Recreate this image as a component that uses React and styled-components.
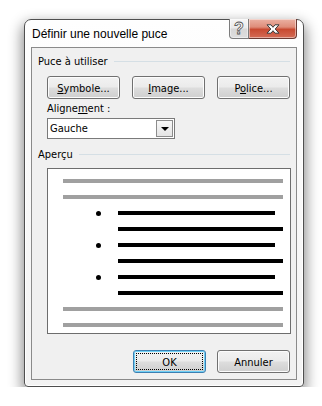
import React from 'react';
import styled, { createGlobalStyle } from 'styled-components';

const GlobalStyle = createGlobalStyle`
  html, body {
    margin: 0;
    background: #ffffff;
  }
  body {
    font-family: "Liberation Sans", Arial, sans-serif;
  }
`;

const uiFont = `"DejaVu Sans Condensed", "DejaVu Sans", sans-serif`;

const Page = styled.div`
  padding: 19px 0 0 24px;
`;

const Window = styled.div`
  width: 280px;
  box-sizing: border-box;
  border: 1px solid #4f4f4f;
  border-radius: 7px 7px 4px 4px;
  background: linear-gradient(#fefefe, #f3f3f3);
  box-shadow: 0 6px 14px 2px rgba(0, 0, 0, 0.45), inset 0 0 0 1px #ffffff;
  padding: 0 6px 6px 6px;
`;

const TitleBar = styled.div`
  height: 27px;
  display: flex;
  align-items: center;
  padding-left: 1px;
`;

const Title = styled.div`
  flex: 1;
  font-family: "Liberation Sans", Arial, sans-serif;
  font-size: 12px;
  color: #000;
`;

const Caption = styled.div`
  align-self: flex-start;
  margin-top: -1px;
  display: flex;
`;

const CaptionButton = styled.div`
  height: 20px;
  box-sizing: border-box;
  display: flex;
  align-items: center;
  justify-content: center;
  border: 1px solid ${(p) => (p.$close ? '#6b3a33' : '#7c7c7c')};
  border-top: none;
  width: ${(p) => (p.$close ? '48px' : '20px')};
  border-radius: ${(p) => (p.$close ? '0 0 4px 0' : '0 0 0 4px')};
  border-left: ${(p) => (p.$close ? 'none' : '1px solid #7c7c7c')};
  background: ${(p) =>
    p.$close
      ? 'linear-gradient(#ebb1a3 0%, #df8d7a 42%, #c84a31 55%, #d46c56 100%)'
      : 'linear-gradient(#f6f6f6 0%, #e9e9e9 48%, #d7d7d7 52%, #dedede 100%)'};
  box-shadow: inset 0 0 0 1px rgba(255, 255, 255, 0.45);
`;

const HelpMark = styled.span`
  font-family: "Liberation Sans", Arial, sans-serif;
  font-weight: bold;
  font-size: 16px;
  line-height: 16px;
  color: #ffffff;
  -webkit-text-stroke: 0.8px #505050;
  margin-top: 1px;
`;

const Client = styled.div`
  border: 1px solid #8a8a8a;
  background: #f0f0f0;
  padding: 6px;
  display: flex;
  flex-direction: column;
  font-family: ${uiFont};
  font-size: 11px;
  color: #000;
`;

const GroupHeader = styled.div`
  height: 15px;
  display: flex;
  align-items: center;
  margin-top: ${(p) => p.$top || 0}px;
  span {
    line-height: 15px;
  }
  &::after {
    content: '';
    flex: 1;
    height: 1px;
    margin-left: 6px;
    background: #d5dfe5;
  }
`;

const ButtonRow = styled.div`
  display: flex;
  gap: ${(p) => p.$gap || 12}px;
  justify-content: ${(p) => (p.$end ? 'flex-end' : 'flex-start')};
  margin-left: ${(p) => (p.$end ? 0 : 9)}px;
  margin-top: ${(p) => p.$top || 0}px;
`;

const Button = styled.div`
  position: relative;
  width: 73px;
  height: 23px;
  box-sizing: border-box;
  display: flex;
  align-items: center;
  justify-content: center;
  border: 1px solid ${(p) => (p.$default ? '#3c7fb1' : '#707070')};
  border-radius: 3px;
  background: linear-gradient(#f2f2f2 0%, #ebebeb 48%, #dddddd 52%, #cfcfcf 100%);
  box-shadow: inset 0 0 0 1px ${(p) => (p.$default ? '#6fd0f6' : '#fcfcfc')};
  padding-top: 1px;
`;

const FocusRing = styled.span`
  position: absolute;
  inset: 2px;
  border: 1px dotted #000;
`;

const U = styled.span`
  text-decoration: underline;
`;

const Label = styled.div`
  height: 15px;
  line-height: 15px;
  margin: 2px 0 0 9px;
`;

const Combo = styled.div`
  width: 128px;
  height: 21px;
  box-sizing: border-box;
  margin: 2px 0 0 9px;
  border: 1px solid #7a7a7a;
  background: #ffffff;
  display: flex;
  align-items: stretch;
`;

const ComboText = styled.div`
  flex: 1;
  padding-left: 2px;
  display: flex;
  align-items: center;
`;

const ComboArrow = styled.div`
  width: 17px;
  box-sizing: border-box;
  border: 1px solid #8c8c8c;
  margin: 1px;
  background: linear-gradient(#f8f8f8, #e4e4e4);
  display: flex;
  align-items: center;
  justify-content: center;
  &::before {
    content: '';
    border-left: 4px solid transparent;
    border-right: 4px solid transparent;
    border-top: 4px solid #000;
  }
`;

const Preview = styled.div`
  width: 244px;
  height: 166px;
  box-sizing: border-box;
  margin: 6px 0 0 9px;
  border: 1px solid #6d6d6d;
  background: #ffffff;
  padding: 10px 7px 0 15px;
  display: flex;
  flex-direction: column;
  gap: 12px;
`;

const Line = styled.div`
  height: 4px;
  display: flex;
  align-items: center;
  padding-left: ${(p) => p.$indent || 0}px;
  padding-right: ${(p) => p.$inset || 0}px;
`;

const Bar = styled.div`
  flex: 1;
  height: 4px;
  background: ${(p) => (p.$dark ? '#000000' : '#a0a0a0')};
`;

const Dot = styled.span`
  width: 5px;
  height: 5px;
  flex: none;
  border-radius: 50%;
  background: #000;
  margin-right: 17px;
`;

const previewLines = [
  { type: 'text' },
  { type: 'text' },
  { type: 'bullet' },
  { type: 'cont' },
  { type: 'bullet' },
  { type: 'cont' },
  { type: 'bullet' },
  { type: 'cont' },
  { type: 'text' },
  { type: 'text' },
];

const CloseIcon = () => (
  <svg width="14" height="10" viewBox="0 0 14 10">
    <path
      d="M1 0.8 H5 L7 3.3 L9 0.8 H13 L9.2 5 L13 9.2 H9 L7 6.7 L5 9.2 H1 L4.8 5 Z"
      fill="#ffffff"
      stroke="#3b3b3b"
      strokeWidth="1"
      strokeLinejoin="round"
    />
  </svg>
);

const App = () => {
  return (
    <Page>
      <GlobalStyle />
      <Window>
        <TitleBar>
          <Title>Définir une nouvelle puce</Title>
          <Caption>
            <CaptionButton>
              <HelpMark>?</HelpMark>
            </CaptionButton>
            <CaptionButton $close>
              <CloseIcon />
            </CaptionButton>
          </Caption>
        </TitleBar>

        <Client>
          <GroupHeader>
            <span>Puce à utiliser</span>
          </GroupHeader>
          <ButtonRow $top={7}>
            <Button><span><U>S</U>ymbole...</span></Button>
            <Button><span><U>I</U>mage...</span></Button>
            <Button><span>P<U>o</U>lice...</span></Button>
          </ButtonRow>
          <Label>Aligne<U>m</U>ent :</Label>
          <Combo>
            <ComboText>Gauche</ComboText>
            <ComboArrow />
          </Combo>

          <GroupHeader $top={8}>
            <span>Aperçu</span>
          </GroupHeader>
          <Preview>
            {previewLines.map((l, i) => {
              if (l.type === 'bullet') {
                return (
                  <Line key={i} $indent={33} $inset={8}>
                    <Dot />
                    <Bar $dark />
                  </Line>
                );
              }
              if (l.type === 'cont') {
                return (
                  <Line key={i} $indent={55}>
                    <Bar $dark />
                  </Line>
                );
              }
              return (
                <Line key={i}>
                  <Bar />
                </Line>
              );
            })}
          </Preview>

          <ButtonRow $end $gap={11} $top={16}>
            <Button $default>
              <FocusRing />
              <span>OK</span>
            </Button>
            <Button><span>Annuler</span></Button>
          </ButtonRow>
        </Client>
      </Window>
    </Page>
  );
};

export default App;
